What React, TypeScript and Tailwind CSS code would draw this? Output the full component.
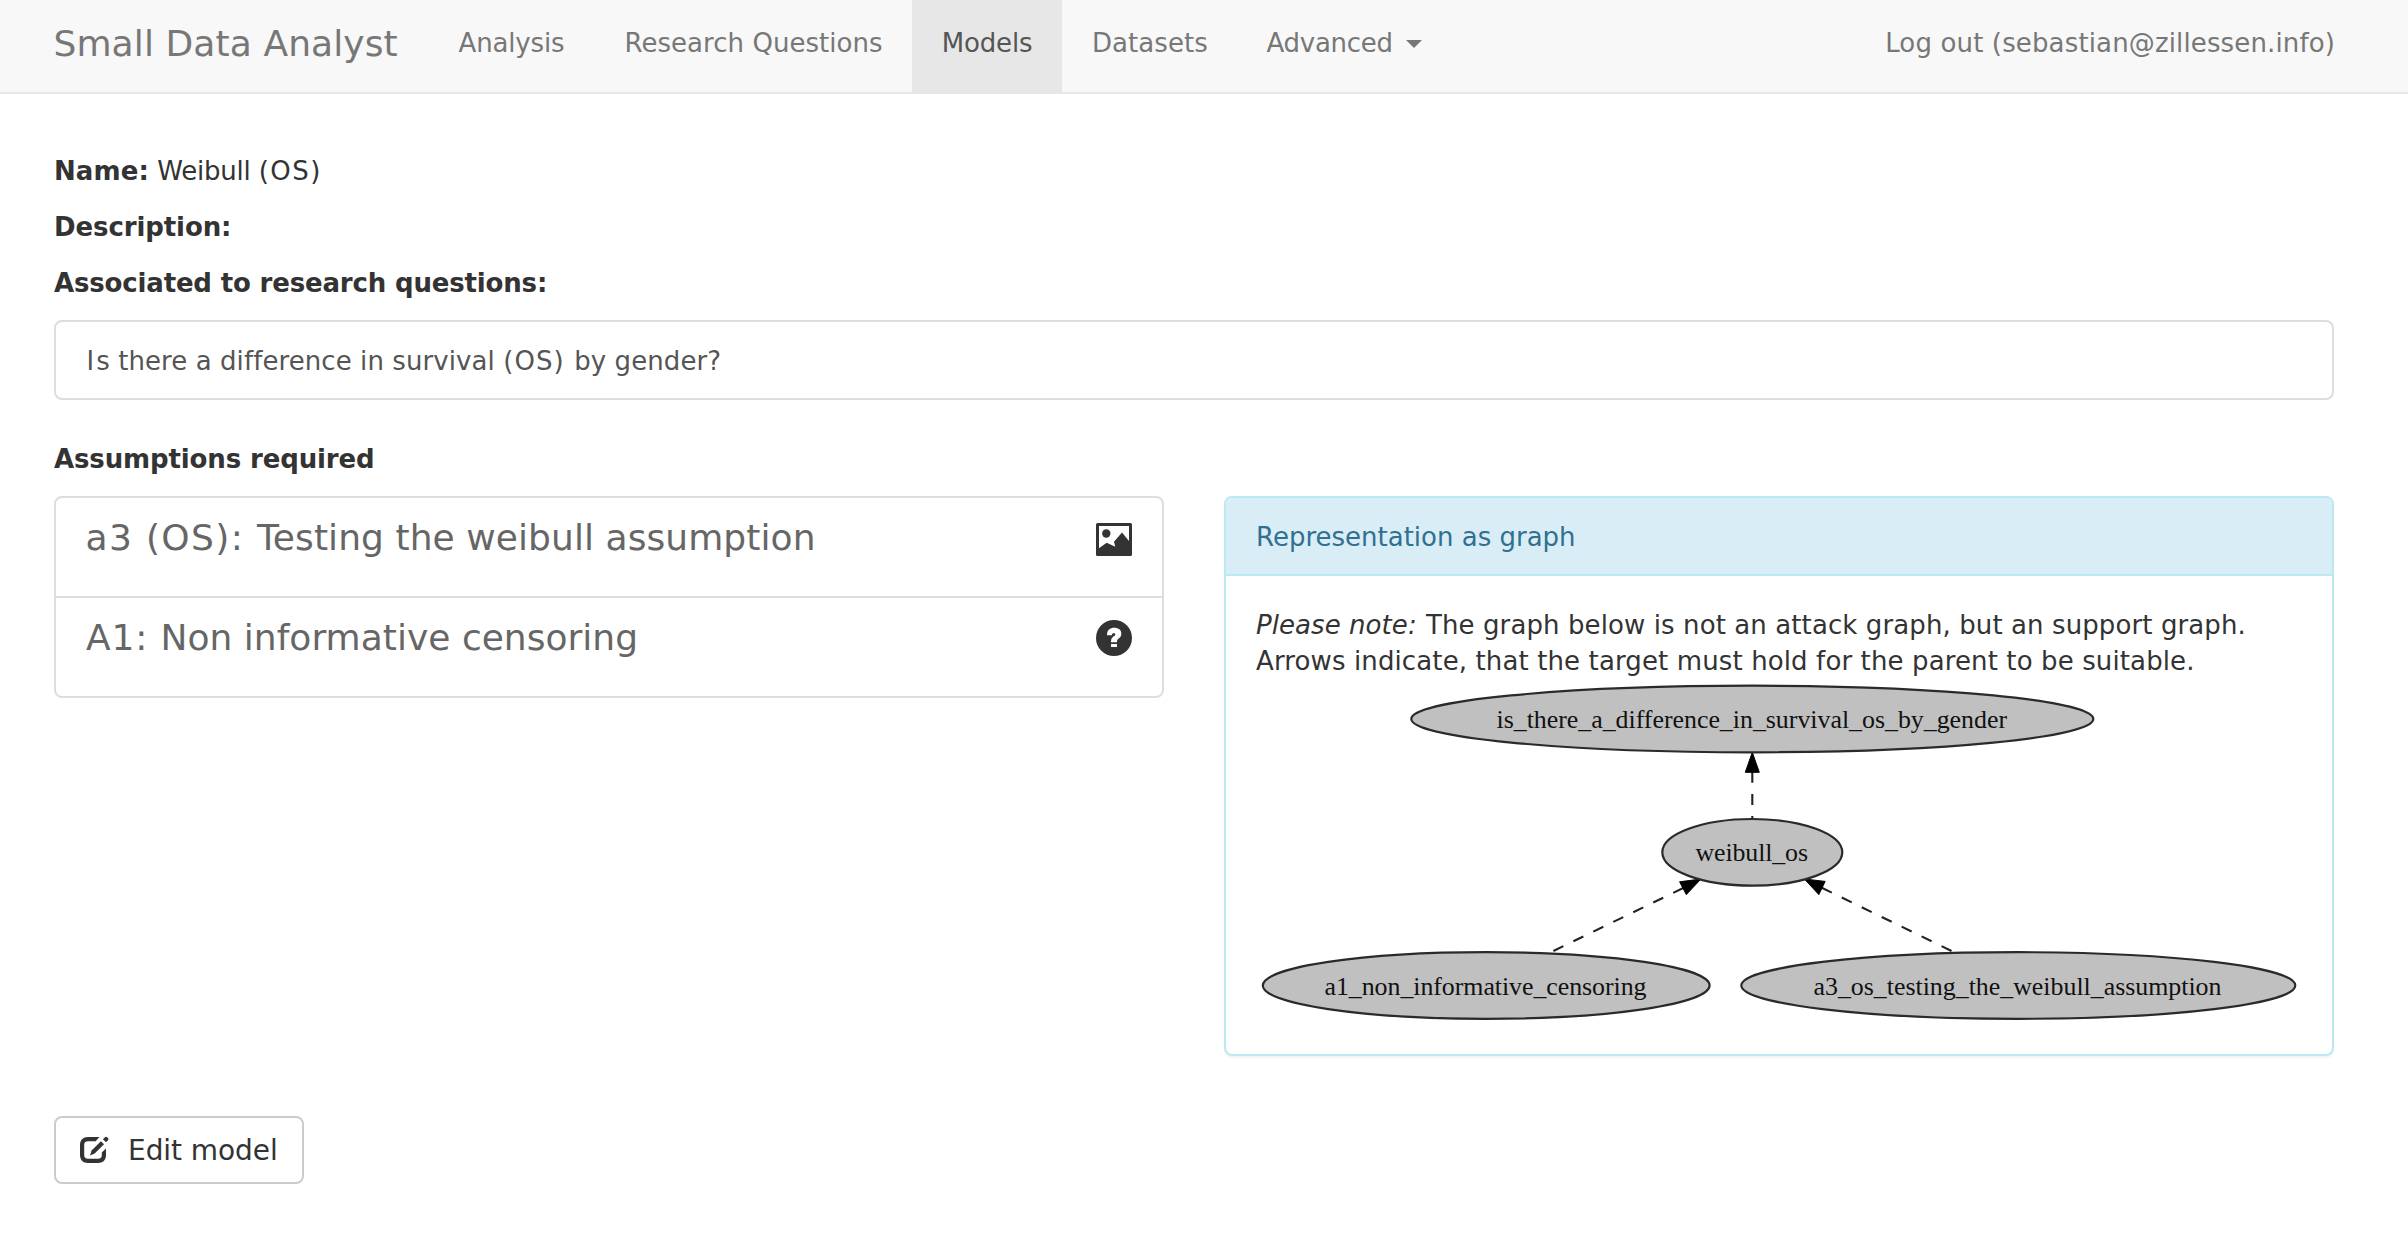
import React from "react";

function Caret() {
  return (
    <svg className="mt-[15px] ml-[13px] h-[8px] w-[16px] shrink-0" viewBox="0 0 16 8">
      <path d="M0 0H16L8 8Z" fill="#777777" />
    </svg>
  );
}

function PictureIcon() {
  return (
    <svg className="mt-[5px] h-[33px] w-[36px] shrink-0" viewBox="0 0 36 33">
      <rect width="36" height="33" rx="1.5" fill="#333333" />
      <path d="M3 3H33V18L26 9.5L18 18.7L19.3 23.7L10.7 19.7L3 25.3Z" fill="#ffffff" />
      <circle cx="10.3" cy="10.5" r="4.2" fill="#333333" />
    </svg>
  );
}

function QuestionIcon() {
  return (
    <svg className="mt-[2px] h-[36px] w-[36px] shrink-0" viewBox="0 0 36 36">
      <circle cx="18" cy="18" r="18" fill="#333333" />
      <path
        d="M11 15.2C11 10 14 7.8 18.3 7.8C22.5 7.8 25.3 10 25.3 13.4C25.3 16.6 23.8 17.6 22.3 18.7C21.2 19.6 20.9 20.6 21 22.2H15C15 19.3 15.4 18.3 17.4 16.6C18.8 15.6 19.3 15 19.3 14.4C19.3 13.4 18.6 13.1 17.6 13.2C16.5 13.3 15.8 14 15.8 15.2Z"
        fill="#ffffff"
      />
      <rect x="15" y="24" width="6" height="3" fill="#ffffff" />
    </svg>
  );
}

function EditIcon() {
  return (
    <svg className="-mt-[3px] h-[28px] w-[29px] shrink-0" viewBox="0 0 29 28">
      <path
        d="M19.5 2H8C3 2 0 5 0 10V20C0 25 3 28 8 28H18C23 28 26 25 26 20V13.6L21.8 17.6V20C21.8 22.6 20.6 23.8 18 23.8H8C5.4 23.8 4.2 22.6 4.2 20V10C4.2 7.4 5.4 6.2 8 6.2H15.6Z"
        fill="#333333"
      />
      <path d="M10 20.6L11.6 15.6L20.9 6.2L24 9.2L14.7 18.4Z" fill="#333333" />
      <path d="M22.9 4.3L25.2 2Q26.3 1.4 27.4 2.4L28 3Q29 4.2 28.2 5.1L26 7.3Z" fill="#333333" />
    </svg>
  );
}

const nodes = [
  { label: "is_there_a_difference_in_survival_os_by_gender", cx: 1752.3, cy: 719, rx: 341, tx: 1496.5, w: 510.5, ty: 728 },
  { label: "weibull_os", cx: 1752.3, cy: 852.3, rx: 90, tx: 1695.5, w: 112.5, ty: 861.3 },
  { label: "a1_non_informative_censoring", cx: 1486.2, cy: 985.5, rx: 223.4, tx: 1324.5, w: 322, ty: 994.5 },
  { label: "a3_os_testing_the_weibull_assumption", cx: 2018.3, cy: 985.5, rx: 277, tx: 1813.5, w: 408, ty: 994.5 },
];

const edges = [
  { from: "M1752.3 771.7V818.6", head: "M1752.3 752.3L1745.3 772.3H1759.3Z" },
  { from: "M1683.2 888L1553 951.2", head: "M1701 879L1679.6 881.8L1686.3 894.6Z" },
  { from: "M1821.8 887.8L1952 951.2", head: "M1804.4 879L1825.2 881.4L1818.8 894.6Z" },
];

function SupportGraph() {
  return (
    <svg className="block h-[375px] w-[1106px]" viewBox="1226 679 1106 375">
      {edges.map((e) => (
        <g key={e.from}>
          <path d={e.from} fill="none" stroke="#222222" strokeWidth="2.1" strokeDasharray="11.1 11.1" />
          <path d={e.head} fill="#000000" stroke="#000000" strokeWidth="1" />
        </g>
      ))}
      {nodes.map((n) => (
        <g key={n.label}>
          <ellipse cx={n.cx} cy={n.cy} rx={n.rx} ry="33.3" fill="#c0c0c0" stroke="#2a2a2a" strokeWidth="2.2" />
          <text
            x={n.tx}
            y={n.ty}
            textLength={n.w}
            fill="#111111"
            className="font-['Liberation_Serif',serif] text-[25.9px]"
          >
            {n.label}
          </text>
        </g>
      ))}
    </svg>
  );
}

function Navbar() {
  return (
    <nav className="flex h-[94px] items-start border-b-2 border-[#e7e7e7] bg-[#f8f8f8] pr-[74px] pl-[53.5px] text-[#777777]">
      <a className="w-[374.5px] pt-[24px] text-[36px] leading-[40px] tracking-[0.1px]">Small Data Analyst</a>
      <a className="w-[166px] pt-[25px] pl-[30.5px] tracking-[-0.14px]">Analysis</a>
      <a className="w-[318px] pt-[25px] pl-[30.5px] tracking-[0.04px]">Research Questions</a>
      <a className="h-[94px] w-[150px] bg-[#e7e7e7] pt-[25px] pl-[29.8px] tracking-[-0.173px] text-[#555555]">Models</a>
      <a className="w-[174px] pt-[25px] pl-[30px] tracking-[0.05px]">Datasets</a>
      <a className="flex pt-[25px] pl-[30.5px] tracking-[-0.275px]">
        Advanced
        <Caret />
      </a>
      <a className="ml-auto w-[448.8px] pt-[25px] tracking-[0.14px]">Log out (sebastian@zillessen.info)</a>
    </nav>
  );
}

export default function App() {
  return (
    <div className="min-h-[1254px] w-[2408px] bg-white font-['DejaVu_Sans',sans-serif] text-[26px] leading-[36px] whitespace-nowrap text-[#333333]">
      <Navbar />
      <main className="w-[2334px] pt-[59px] pl-[54px]">
        <p className="mb-[20px]">
          <b className="tracking-[0.1px]">Name:</b> <span className="tracking-[-0.2px]">Weibull </span>
          <span className="tracking-[1.5px]">(OS)</span>
        </p>
        <p className="mb-[20px]">
          <b className="tracking-[-0.1px]">Description:</b>
        </p>
        <p className="mb-[19px]">
          <b className="tracking-[-0.166px]">Associated to research questions:</b>
        </p>
        <div className="h-[80px] rounded-[8px] border-2 border-[#dddddd] pt-[21px] pl-[30.5px] tracking-[0.08px] text-[#555555]">
          <span className="tracking-[2px]">I</span>s there a difference in survival <span className="tracking-[1.1px]">(OS) </span>
          by gender?
        </div>
        <p className="mt-[41px] mb-[19px]">
          <b className="tracking-[-0.13px]">Assumptions required</b>
        </p>
        <div className="flex items-start justify-between">
          <ul className="w-[1110px] rounded-[8px] border-2 border-[#dddddd] text-[36px] leading-[40px] text-[#666666]">
            <li className="flex h-[100px] justify-between border-b-2 border-[#dddddd] pt-[20px] pr-[30px] pl-[29.5px]">
              <span className="tracking-[0.07px]">
                <span className="tracking-[1.35px]">a3 (OS): </span>Testing the weibull assumption
              </span>
              <PictureIcon />
            </li>
            <li className="flex h-[98px] justify-between pt-[20px] pr-[30px] pl-[30px]">
              <span className="tracking-[0.02px]">
                <span className="tracking-[0.85px]">A1: </span>Non informative censoring
              </span>
              <QuestionIcon />
            </li>
          </ul>
          <section className="h-[560px] w-[1110px] overflow-hidden rounded-[8px] border-2 border-[#bce8f1] shadow-[0_2px_2px_rgba(0,0,0,0.05)]">
            <h3 className="h-[78px] border-b-2 border-[#bce8f1] bg-[#d9edf7] pt-[21px] pl-[30px] text-[#31708f]">
              Representation as graph
            </h3>
            <p className="pt-[31px] pl-[30px]">
              <i className="tracking-[0.062px]">Please note:</i>{" "}
              <span className="ml-[1px] tracking-[0.1px]">The graph below is not an attack graph, but an support graph.</span>
              <br />
              <span className="tracking-[0.119px]">
                Arrows indicate, that the target must hold for the parent to be suitable.
              </span>
            </p>
            <SupportGraph />
          </section>
        </div>
        <button className="mt-[60px] flex h-[68px] w-[250px] items-center gap-[19px] rounded-[8px] border-2 border-[#cccccc] pl-[24px] text-[28px] leading-[40px] tracking-[-0.059px]">
          <EditIcon />
          <span className="mt-[1px]">Edit model</span>
        </button>
      </main>
    </div>
  );
}
